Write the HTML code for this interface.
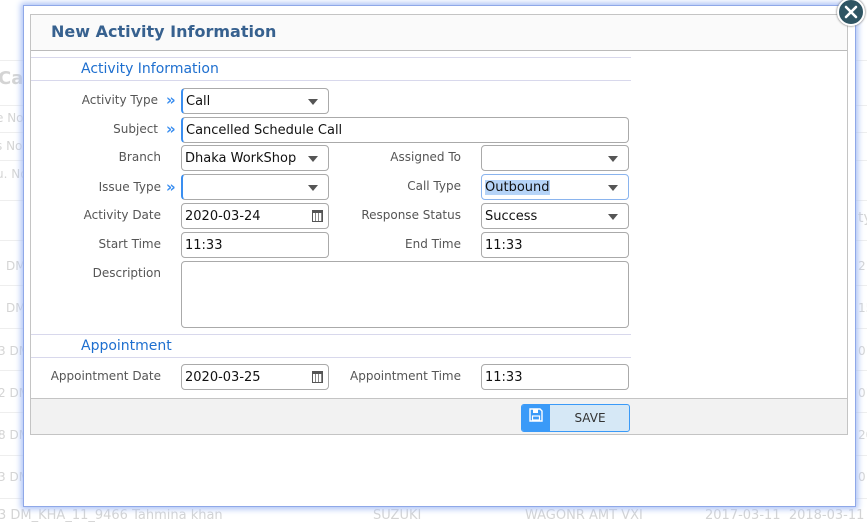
<!DOCTYPE html>
<html><head><style>
*{box-sizing:border-box;margin:0;padding:0}
body{width:867px;height:520px;overflow:hidden;background:#fff;font-family:"DejaVu Sans","Liberation Sans",sans-serif;position:relative}
.bg{position:absolute;color:#d4d4d4;font-size:12px;white-space:nowrap}
.hl{position:absolute;left:0;width:867px;height:1px;background:#eee}
.modal{position:absolute;left:23px;top:5px;width:833px;height:502px;background:#fff;border:1px solid #8fa8e8;box-shadow:0 0 6px 2px #a9c0f5}
.panel{position:absolute;left:6px;top:8px;width:818px;height:421px;border:1px solid #c4c4c4;background:#fff}
.head{position:absolute;left:0;top:0;width:816px;height:36px;background:#fafafa;border-bottom:1px solid #bbb}
.title{position:absolute;left:20px;top:7px;font-size:16px;font-weight:bold;color:#37618f}
.lav{position:absolute;left:0;width:600px;height:1px;background:#d8d8ec}
.sec{position:absolute;left:50px;font-size:14px;color:#1e6fcf}
.lbl{position:absolute;font-size:12px;color:#555;text-align:right}
.in{position:absolute;height:26px;border:1px solid #aaa;border-radius:4px;background:#fff;font-size:13px;color:#111;padding:5px 3px;font-family:"DejaVu Sans","Liberation Sans",sans-serif;white-space:nowrap}
.req{border-left:2px solid #3a8ef0}
.ch{position:absolute;font-size:15px;line-height:14px;color:#3a8ef0;font-weight:bold}
.arr{position:absolute;right:10px;top:10px;width:0;height:0;border-left:5px solid transparent;border-right:5px solid transparent;border-top:6px solid #555}
.cal{position:absolute;right:5px;top:6px;width:11px;height:12px;border:1px solid #555;border-top:3px solid #555;background:repeating-linear-gradient(90deg,#fff 0 2px,#888 2px 3px)}
.foot{position:absolute;left:0;top:383px;width:816px;height:36px;background:#f2f2f2;border-top:1px solid #c4c4c4}
</style></head><body>
<div class="hl" style="top:60px"></div><div class="hl" style="top:105px"></div><div class="hl" style="top:132px"></div><div class="hl" style="top:160px"></div><div class="hl" style="top:200px"></div><div class="hl" style="top:240px"></div><div class="hl" style="top:285px"></div><div class="hl" style="top:328px"></div><div class="hl" style="top:370px"></div><div class="hl" style="top:412px"></div><div class="hl" style="top:455px"></div><div class="hl" style="top:498px"></div>
<div class="bg" style="left:-2px;top:68px;font-size:18px;font-weight:bold">Ca</div>
<div class="bg" style="left:-4px;top:111px">e No</div><div class="bg" style="left:-4px;top:139px">s No</div><div class="bg" style="left:-4px;top:167px">u. No</div>
<div class="bg" style="left:6px;top:259px">DM</div><div class="bg" style="left:6px;top:301px">DM</div><div class="bg" style="left:-2px;top:344px">3 DM</div><div class="bg" style="left:-2px;top:386px">2 DM</div><div class="bg" style="left:-2px;top:428px">8 DM</div><div class="bg" style="left:-2px;top:470px">3 DM</div>
<div class="bg" style="left:-2px;top:508px;font-size:13px">3 DM_KHA_11_9466 Tahmina khan</div>
<div class="bg" style="left:373px;top:508px;font-size:13px">SUZUKI</div>
<div class="bg" style="left:525px;top:508px;font-size:13px">WAGONR AMT VXI</div>
<div class="bg" style="left:705px;top:508px;font-size:13px">2017-03-11 &nbsp;2018-03-11</div>
<div class="bg" style="left:858px;top:259px">21</div><div class="bg" style="left:858px;top:301px">15</div><div class="bg" style="left:858px;top:344px">01</div><div class="bg" style="left:858px;top:386px">01</div><div class="bg" style="left:858px;top:428px">20</div><div class="bg" style="left:858px;top:470px">01</div><div class="bg" style="left:858px;top:210px;font-size:14px">ty</div>
<div class="modal">
<div class="panel">
<div class="head"><div class="title">New Activity Information</div></div>
<div class="lav" style="top:42px"></div>
<div class="sec" style="top:46px">Activity Information</div>
<div class="lav" style="top:65px"></div>

<div class="lbl" style="left:0;width:127px;top:78px">Activity Type</div><div class="ch" style="left:135px;top:78px">»</div>
<div class="in req" style="left:150px;top:73px;width:148px">Call<div class="arr"></div></div>

<div class="lbl" style="left:0;width:127px;top:107px">Subject</div><div class="ch" style="left:135px;top:107px">»</div>
<div class="in req" style="left:150px;top:102px;width:448px">Cancelled Schedule Call</div>

<div class="lbl" style="left:0;width:130px;top:135px">Branch</div>
<div class="in" style="left:150px;top:130px;width:148px">Dhaka WorkShop<div class="arr"></div></div>
<div class="lbl" style="left:300px;width:130px;top:135px">Assigned To</div>
<div class="in" style="left:450px;top:130px;width:148px"><div class="arr"></div></div>

<div class="lbl" style="left:0;width:130px;top:165px">Issue Type</div><div class="ch" style="left:135px;top:165px">»</div>
<div class="in req" style="left:150px;top:159px;width:148px"><div class="arr"></div></div>
<div class="lbl" style="left:300px;width:130px;top:164px">Call Type</div>
<div class="in" style="left:450px;top:159px;width:148px;border-color:#8ab4ee"><span style="background:#b6d4f8">Outbound</span><div class="arr"></div></div>

<div class="lbl" style="left:0;width:130px;top:193px">Activity Date</div>
<div class="in" style="left:150px;top:188px;width:148px">2020-03-24<div class="cal"></div></div>
<div class="lbl" style="left:300px;width:130px;top:193px">Response Status</div>
<div class="in" style="left:450px;top:188px;width:148px">Success<div class="arr"></div></div>

<div class="lbl" style="left:0;width:130px;top:222px">Start Time</div>
<div class="in" style="left:150px;top:217px;width:148px">11:33</div>
<div class="lbl" style="left:300px;width:130px;top:222px">End Time</div>
<div class="in" style="left:450px;top:217px;width:148px">11:33</div>

<div class="lbl" style="left:0;width:130px;top:251px">Description</div>
<div class="in" style="left:150px;top:246px;width:448px;height:67px"></div>

<div class="lav" style="top:319px"></div>
<div class="sec" style="top:323px">Appointment</div>
<div class="lav" style="top:342px"></div>

<div class="lbl" style="left:0;width:130px;top:354px">Appointment Date</div>
<div class="in" style="left:150px;top:349px;width:148px">2020-03-25<div class="cal"></div></div>
<div class="lbl" style="left:300px;width:130px;top:354px">Appointment Time</div>
<div class="in" style="left:450px;top:349px;width:148px">11:33</div>

<div class="foot">
<div style="position:absolute;left:490px;top:5px;width:109px;height:28px;border:1px solid #3a9af8;border-radius:3px;background:#d6e8f6;overflow:hidden">
<div style="position:absolute;left:0;top:0;width:28px;height:26px;background:#3a9af8">
<svg width="14" height="14" viewBox="0 0 14 14" style="position:absolute;left:7px;top:3px"><path d="M1 1h10l2 2v10H1z" fill="none" stroke="#fff" stroke-width="1.4"/><rect x="4" y="1.5" width="5" height="3.5" fill="#fff"/><rect x="3.5" y="8" width="7" height="4" fill="none" stroke="#fff" stroke-width="1.2"/></svg>
</div>
<div style="position:absolute;left:28px;top:6px;width:80px;text-align:center;font-size:12px;color:#333">SAVE</div>
</div>
</div>
</div>
</div>
<div style="position:absolute;left:837px;top:-2px;width:28px;height:28px;border-radius:50%;background:#2f5563;border:2px solid #fff;box-shadow:0 0 2px #555">
<svg width="24" height="24" viewBox="0 0 24 24"><path d="M7 7L17 17M17 7L7 17" stroke="#fff" stroke-width="2.6" stroke-linecap="round"/></svg></div>
</body></html>
